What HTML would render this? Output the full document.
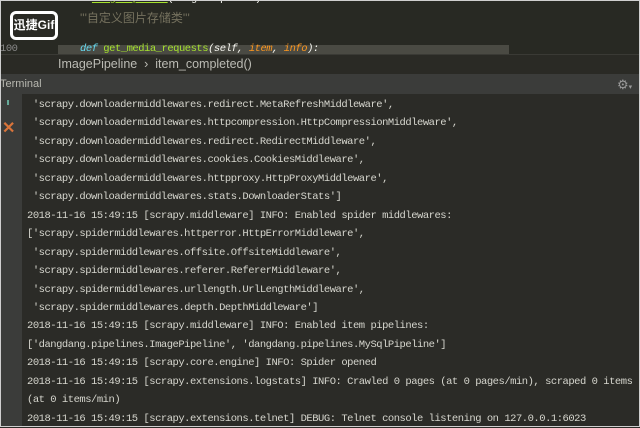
<!DOCTYPE html>
<html><head><meta charset="utf-8"><style>
body{margin:0;width:640px;height:427px;overflow:hidden;background:#2b2b27;position:relative;font-family:"Liberation Sans","Noto Sans CJK SC",sans-serif}
.a{position:absolute}
.mono{font-family:"Liberation Mono","Noto Sans CJK SC",monospace;font-size:10.5px;letter-spacing:-0.48px;color:#d6d6ce;white-space:pre}
</style></head><body>
<div class="a" style="left:0;top:0;width:640px;height:54px;background:#282923"></div>
<div class="a" style="left:58px;top:45px;width:451px;height:9px;background:#4a4a43"></div>
<div class="a mono" style="left:57px;top:-7px;color:#f8f8f2">class <span style="color:#a6e22e;text-decoration:underline">ImagePipeline</span>(ImagesPipeline):</div>
<div class="a" style="left:80px;top:9px;font-size:12px;color:#75715e">'''自定义图片存储类'''</div>
<div class="a mono" style="left:80px;top:43px;color:#66d9ef;font-style:italic">def <span style="color:#a6e22e;font-style:normal">get_media_requests</span><span style="color:#f8f8f2">(self, </span><span style="color:#fd971f">item</span><span style="color:#f8f8f2">, </span><span style="color:#fd971f">info</span><span style="color:#f8f8f2">):</span></div>
<div class="a mono" style="left:0;top:-7px;color:#888">97</div>
<div class="a mono" style="left:0;top:43px;color:#888">100</div>
<div class="a" style="left:10px;top:11px;width:48px;height:29px;border:3px solid #fff;border-radius:6px;box-sizing:border-box;background:#2a2a24;color:#fff;font-weight:bold;font-size:12px;line-height:23px;text-align:center">迅捷Gif</div>
<div class="a" style="left:0;top:54px;width:640px;height:20px;background:#2a2a25;border-top:1px solid #3a3a35"></div>
<div class="a" style="left:58px;top:57px;font-size:12.5px;color:#bbbbb4">ImagePipeline &nbsp;›&nbsp; item_completed()</div>
<div class="a" style="left:0;top:74px;width:640px;height:20px;background:#3b3c3a"></div>
<div class="a" style="left:0;top:78px;font-size:11px;color:#b8b8b0">Terminal</div>
<div class="a" style="left:617px;top:77px;font-size:13px;color:#9a9a9a">⚙<span style="font-size:7px">▾</span></div>
<div class="a" style="left:0;top:94px;width:22px;height:333px;background:#3b3c3a"></div>
<div class="a" style="left:7px;top:100px;width:2px;height:5px;background:#6a9"></div>
<div class="a" style="left:2px;top:118px;font-size:16px;color:#d9743a;font-weight:bold">✕</div>
<div class="a mono" style="left:27px;top:96px;line-height:18.45px"> 'scrapy.downloadermiddlewares.redirect.MetaRefreshMiddleware',
 'scrapy.downloadermiddlewares.httpcompression.HttpCompressionMiddleware',
 'scrapy.downloadermiddlewares.redirect.RedirectMiddleware',
 'scrapy.downloadermiddlewares.cookies.CookiesMiddleware',
 'scrapy.downloadermiddlewares.httpproxy.HttpProxyMiddleware',
 'scrapy.downloadermiddlewares.stats.DownloaderStats']
2018-11-16 15:49:15 [scrapy.middleware] INFO: Enabled spider middlewares:
['scrapy.spidermiddlewares.httperror.HttpErrorMiddleware',
 'scrapy.spidermiddlewares.offsite.OffsiteMiddleware',
 'scrapy.spidermiddlewares.referer.RefererMiddleware',
 'scrapy.spidermiddlewares.urllength.UrlLengthMiddleware',
 'scrapy.spidermiddlewares.depth.DepthMiddleware']
2018-11-16 15:49:15 [scrapy.middleware] INFO: Enabled item pipelines:
['dangdang.pipelines.ImagePipeline', 'dangdang.pipelines.MySqlPipeline']
2018-11-16 15:49:15 [scrapy.core.engine] INFO: Spider opened
2018-11-16 15:49:15 [scrapy.extensions.logstats] INFO: Crawled 0 pages (at 0 pages/min), scraped 0 items
(at 0 items/min)
2018-11-16 15:49:15 [scrapy.extensions.telnet] DEBUG: Telnet console listening on 127.0.0.1:6023</div>
<div class="a" style="left:0;top:0;width:640px;height:427px;box-sizing:border-box;border:1px solid #cfcfcf"></div>
</body></html>
